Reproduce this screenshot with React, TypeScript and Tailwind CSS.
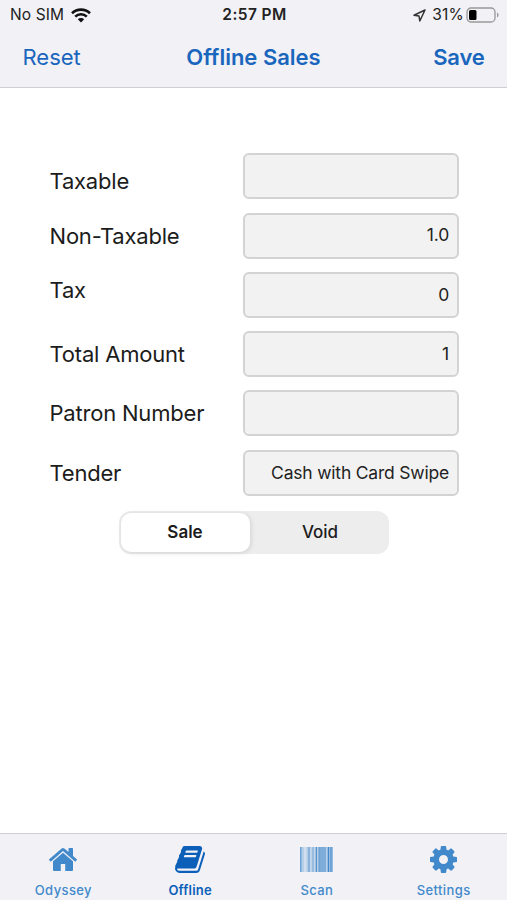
import React, { useState } from 'react';

interface FieldItem {
  label: string;
  value: string;
  shift?: string;
}

interface TabItem {
  title: string;
  icon: React.ReactNode;
}

const fields: FieldItem[] = [
  { label: 'Taxable', value: '', shift: 'pt-2.5' },
  { label: 'Non-Taxable', value: '1.0', shift: 'pt-px' },
  { label: 'Tax', value: '0', shift: 'pb-2' },
  { label: 'Total Amount', value: '1', shift: 'pt-px' },
  { label: 'Patron Number', value: '' },
  { label: 'Tender', value: 'Cash with Card Swipe', shift: 'pt-px' },
];

// x, width, opacity of every stripe
const bars = [
  [0, 1.6, 0.75], [1.6, 2.2, 0.35], [3.8, 2.6, 0.18], [6.4, 1.6, 0.35], [8, 2, 0.6],
  [10, 1.8, 0.25], [11.8, 2.2, 0.5], [14, 1.6, 0.25], [15.6, 1.5, 0.9], [17.1, 1.2, 0.25],
  [18.3, 1.7, 0.75], [20, 6, 0.65], [26, 1.6, 0.3], [27.6, 1.6, 1], [29.2, 0.8, 0.45], [30, 2.7, 0.75],
];

const HomeIcon = () => (
  <svg className="h-[23px] w-7" viewBox="89 253 1614 1283" preserveAspectRatio="none" fill="currentColor">
    <path d="M1472 992v480q0 26-19 45t-45 19h-384v-384h-256v384h-384q-26 0-45-19t-19-45v-480q0-1 .5-3t.5-3l575-474 575 474q1 2 1 6zm223-69l-62 74q-8 9-21 11h-3q-13 0-21-7l-692-577-692 577q-12 8-24 7-13-2-21-11l-62-74q-8-10-7-23.5t11-21.5l719-599q32-26 76-26t76 26l244 204v-195q0-14 9-23t23-9h192q14 0 23 9t9 23v408l219 182q10 8 11 21.5t-7 23.5z" />
  </svg>
);

const BookIcon = () => (
  <svg className="h-[27px] w-[30px]" viewBox="63 128 1667 1536" preserveAspectRatio="none" fill="currentColor">
    <path d="M1703 478q40 57 18 129l-275 906q-19 64-76.5 107.5t-122.5 43.5h-923q-77 0-148.5-53.5t-99.5-131.5q-24-67-2-127 0-4 3-27t4-37q1-8-3-21.5t-3-19.5q2-11 8-21t16.5-23.5 16.5-23.5q23-38 45-91.5t30-91.5q3-10 .5-30t-.5-28q3-11 17-28t17-23q21-36 42-92t25-90q1-9-2.5-32t.5-28q4-13 22-30.5t22-22.5q19-26 42.5-84.5t27.5-96.5q1-8-3-25.5t-2-26.5q2-8 9-18t18-23 17-21q8-12 16.5-30.5t15-35 16-36 19.5-32 26.5-23.5 36-11.5 47.5 5.5l-1 3q38-9 51-9h761q74 0 114 56t18 130l-274 906q-36 119-71.5 153.5t-128.5 34.5h-869q-27 0-38 15-11 16-1 43 24 70 144 70h923q29 0 56-15.5t35-41.5l300-987q7-22 5-57 38 15 59 43zm-1064 2q-4 13 2 22.5t20 9.5h608q13 0 25.5-9.5t16.5-22.5l21-64q4-13-2-22.5t-20-9.5h-608q-13 0-25.5 9.5t-16.5 22.5zm-83 256q-4 13 2 22.5t20 9.5h608q13 0 25.5-9.5t16.5-22.5l21-64q4-13-2-22.5t-20-9.5h-608q-13 0-25.5 9.5t-16.5 22.5z" />
  </svg>
);

const BarcodeIcon = () => (
  <svg className="h-[25px] w-[33px]" viewBox="0 0 33 25" fill="currentColor">
    {bars.map(([x, width, opacity]) => (
      <rect key={x} x={x} y="0" width={width} height="25" opacity={opacity} />
    ))}
  </svg>
);

const CogIcon = () => (
  <svg className="size-[27px]" viewBox="0 128 1536 1536" fill="currentColor">
    <path d="M1024 896q0-106-75-181t-181-75-181 75-75 181 75 181 181 75 181-75 75-181zm512-109v222q0 12-8 23t-20 13l-185 28q-19 54-39 91 35 50 107 138 10 12 10 25t-9 23q-27 37-99 108t-94 71q-12 0-26-9l-138-108q-44 23-91 38-16 136-29 186-7 28-36 28h-222q-14 0-24.5-8.5t-11.5-21.5l-28-184q-49-16-90-37l-141 107q-10 9-25 9-14 0-25-11-126-114-165-168-7-10-7-23 0-12 8-23 15-21 51-66.5t54-70.5q-27-50-41-99l-183-27q-13-2-21-12.5t-8-23.5v-222q0-12 8-23t19-13l186-28q14-46 39-92-40-57-107-138-10-12-10-24 0-10 9-23 26-36 98.5-107.5t94.5-71.5q13 0 26 10l138 107q44-23 91-38 16-136 29-186 7-28 36-28h222q14 0 24.5 8.5t11.5 21.5l28 184q49 16 90 37l142-107q9-9 24-9 13 0 25 10 129 119 165 170 7 8 7 22 0 12-8 23-15 21-51 66.5t-54 70.5q26 50 41 98l183 28q13 2 21 12.5t8 23.5z" />
  </svg>
);

const tabs: TabItem[] = [
  { title: 'Odyssey', icon: <HomeIcon /> },
  { title: 'Offline', icon: <BookIcon /> },
  { title: 'Scan', icon: <BarcodeIcon /> },
  { title: 'Settings', icon: <CogIcon /> },
];

const StatusBar = () => (
  <div className="grid h-[30px] grid-cols-3 items-center pl-2.5 pr-2 text-[#222]">
    <div className="flex items-center gap-[7px]">
      <span className="text-[15.5px] tracking-[0.1px]">No SIM</span>
      <svg className="h-[15px] w-5" viewBox="0 0 20 15" fill="none" stroke="#111" strokeWidth="2.6">
        <path d="M1 5.2a13 13 0 0 1 18 0M4.2 8.6a8.4 8.4 0 0 1 11.6 0" />
        <path d="M10 14.4 6.8 11.2a4.6 4.6 0 0 1 6.4 0z" fill="#111" stroke="none" />
      </svg>
    </div>
    <span className="text-center text-[15.5px] font-semibold tracking-[0.4px]">2:57 PM</span>
    <div className="flex items-center justify-end">
      <svg className="mr-1.5 size-[13px]" viewBox="0 0 13 13" fill="none" stroke="#333" strokeWidth="1.5" strokeLinejoin="round">
        <path d="M12 1 1 6.2l5 .8.8 5z" />
      </svg>
      <span className="text-[15.5px] tracking-[0.2px]">31%</span>
      <svg className="ml-0.5 h-4 w-[33px]" viewBox="0 0 33 16" fill="none">
        <rect x="1" y="1" width="28" height="14" rx="4" stroke="#999" strokeWidth="1.3" />
        <rect x="3" y="3" width="7.5" height="10" rx="1.5" fill="#000" />
        <path d="M31 5.5q1.6.8 1.6 2.5T31 10.500z" fill="#999" />
      </svg>
    </div>
  </div>
);

const App: React.FC = () => {
  const [activeTab, setActiveTab] = useState(1);
  const [mode, setMode] = useState('Sale');

  return (
    <div className="flex h-screen w-full flex-col bg-white font-['Inter',sans-serif]">
      <header className="h-[88px] border-b border-[#cfcfd3] bg-[#f1f1f6]">
        <StatusBar />
        <div className="grid h-[55px] grid-cols-3 items-center px-[22.5px] text-[22px] text-[#1a66bd]">
          <button className="text-left">Reset</button>
          <h1 className="whitespace-nowrap text-center font-semibold">Offline Sales</h1>
          <button className="text-right font-semibold tracking-[-0.2px]">Save</button>
        </div>
      </header>

      <main className="flex-1 pt-[65.3px]">
        <div className="flex flex-col gap-[13.3px] pl-[49.5px] pr-12">
          {fields.map((field) => (
            <div key={field.label} className="flex h-[46px] items-center justify-between">
              <span className={`text-[22px] tracking-[-0.2px] text-[#1c1c1c] ${field.shift ?? ''}`}>{field.label}</span>
              <div className="flex h-full w-[216px] items-center justify-end rounded-md border-2 border-[#d3d3d3] bg-[#f2f2f2] px-2 text-[17.5px] tracking-[-0.2px] text-[#222]">
                {field.value}
              </div>
            </div>
          ))}
        </div>

        <div className="mx-auto mt-[15.5px] flex h-[43px] w-[270px] rounded-xl bg-[#ededed] p-0.5">
          {['Sale', 'Void'].map((item) => (
            <button
              key={item}
              className={`rounded-[10px] text-[17px] text-[#1c1c1c] first:w-[129px] last:flex-1 last:pl-1 ${
                item === mode ? 'bg-white font-semibold shadow-[1px_1px_5px_rgba(0,0,0,0.12)]' : 'font-medium'
              }`}
              onClick={() => setMode(item)}
            >
              {item}
            </button>
          ))}
        </div>
      </main>

      <nav className="grid h-[67px] grid-cols-4 border-t border-[#cfcfd3] bg-[#f1f1f6]">
        {tabs.map((tab, index) => (
          <button
            key={tab.title}
            className={`flex flex-col items-center ${index === activeTab ? 'text-[#0b5fb8]' : 'text-[#4189cb]'}`}
            onClick={() => setActiveTab(index)}
          >
            <div className="flex h-[50px] items-center">{tab.icon}</div>
            <span className={`-mt-0.5 text-[13px] leading-4 ${index === activeTab ? 'font-semibold tracking-[0.2px]' : 'font-medium tracking-[0.4px]'}`}>
              {tab.title}
            </span>
          </button>
        ))}
      </nav>
    </div>
  );
};

export default App;
